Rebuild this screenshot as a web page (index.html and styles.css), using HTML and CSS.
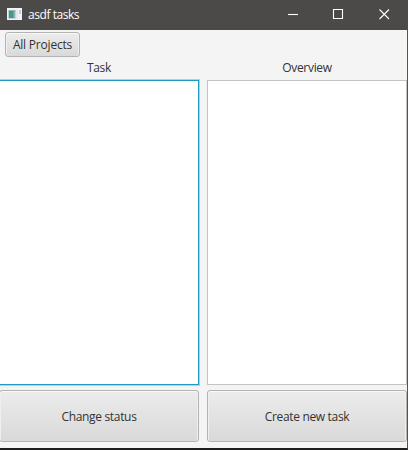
FILE: index.html
```html
<!DOCTYPE html>
<html lang="en">
<head>
<meta charset="utf-8">
<title>asdf tasks</title>
<link rel="stylesheet" href="styles.css">
</head>
<body>
<div class="window">
  <header class="titlebar">
    <svg class="app-icon" width="15" height="12" viewBox="0 0 15 12"><rect width="15" height="12" fill="#f1f3f4"/><rect x="1.500" y="2" width="7" height="8.500" fill="#8fb5b5"/><rect x="2" y="3" width="4.500" height="7" fill="#4a958c"/><rect x="9" y="2" width="2" height="9" fill="#e4e8f2"/><rect x="12" y="2" width="2" height="4" fill="#c5cbd3"/></svg>
    <h1 class="title">asdf tasks</h1>
    <div class="controls">
      <svg width="46" height="30" viewBox="0 0 46 30"><path d="M18 14.5h10"/></svg>
      <svg width="45" height="30" viewBox="0 0 45 30"><path d="M17.500 9.500h9v9h-9z"/></svg>
      <svg width="46" height="30" viewBox="0 0 46 30"><path d="M18.500 9.500l9.500 9.500M28 9.500l-9.500 9.500"/></svg>
    </div>
  </header>
  <main class="content">
    <div class="toolbar"><button class="button small">All Projects</button></div>
    <div class="columns">
      <section class="column">
        <h2 class="label">Task</h2>
        <div class="list focused"></div>
        <button class="button large">Change status</button>
      </section>
      <section class="column">
        <h2 class="label">Overview</h2>
        <div class="list"></div>
        <button class="button large">Create new task</button>
      </section>
    </div>
  </main>
</div>
</body>
</html>
```

FILE: styles.css
```css
* { box-sizing: border-box; }
body {
  margin: 0;
  overflow: hidden;
  font: 12px/16px "Segoe UI", "Open Sans", "Noto Sans", sans-serif;
  letter-spacing: -0.3px;
  color: #333;
}
.window {
  width: 408px;
  height: 450px;
  display: flex;
  flex-direction: column;
  background: #f4f4f4;
  border-right: 1px solid #555452;
  border-bottom: 2px solid #1d1d1d;
}
.titlebar {
  height: 30px;
  flex: none;
  display: flex;
  align-items: center;
  padding: 0 1px 0 7px;
  margin-right: -1px;
  background: #4c4a48;
  color: #fff;
}
.app-icon { margin: -2px 6px 0 0; }
.title { margin: 0; font-size: 12px; font-weight: 400; letter-spacing: -0.45px; }
.controls { display: flex; margin-left: auto; }
.controls path { fill: none; stroke: #fff; stroke-width: 1.1; }
.content { flex: 1; display: flex; flex-direction: column; }
.toolbar { height: 30px; padding: 2px 0 0 5px; }
.button {
  display: flex;
  align-items: center;
  justify-content: center;
  padding: 0;
  border: 1px solid #b3b3b3;
  border-radius: 3px;
  background: linear-gradient(#ececec, #d9d9d9);
  box-shadow: inset 0 1px #f8f8f8, inset 1px 0 #efefef, inset -1px 0 #efefef;
  color: #333;
  font: inherit;
  letter-spacing: -0.2px;
}
.small { width: 75px; height: 25px; }
.columns {
  display: grid;
  grid-template-columns: 200px 200px;
  gap: 8px;
  margin-left: -1px;
}
.column { display: flex; flex-direction: column; }
.label {
  height: 20px;
  margin: 0;
  font-size: 12px;
  font-weight: 400;
  text-align: center;
}
.list {
  height: 305px;
  margin-bottom: 5px;
  border: 1px solid #c3c3c3;
  background: #fff;
}
.focused { border-color: #1c9cc4; box-shadow: 0 0 0 1px #8fdcf5; }
.large { height: 52px; padding-top: 2px; letter-spacing: -0.33px; }
```
